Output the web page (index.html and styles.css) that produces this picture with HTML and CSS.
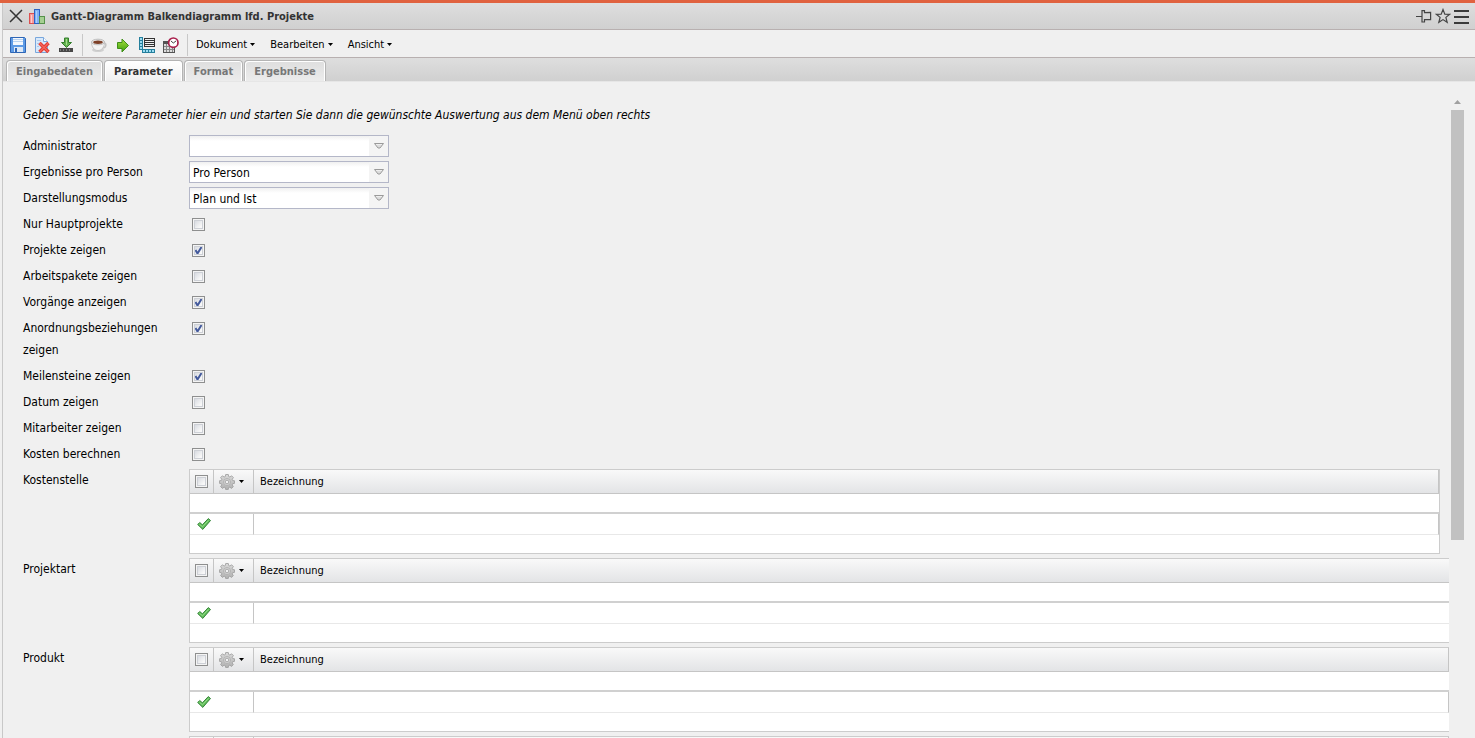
FILE: index.html
```html
<!DOCTYPE html>
<html lang="de">
<head>
    <meta charset="UTF-8">
    <meta name="viewport" content="width=device-width, initial-scale=1.0">
    <title>Gantt-Diagramm Balkendiagramm lfd. Projekte</title>
    <link rel="stylesheet" href="styles.css">
</head>
<body>
    <svg class="symbols" aria-hidden="true">
        <defs>
            <linearGradient id="gearFill" x1="0" y1="0" x2="0" y2="1">
                <stop offset="0" stop-color="#dadada"/>
                <stop offset="1" stop-color="#b0b0b0"/>
            </linearGradient>
            <linearGradient id="arrowFill" x1="0" y1="0" x2="0" y2="1">
                <stop offset="0" stop-color="#a6e03c"/>
                <stop offset="1" stop-color="#3c9e10"/>
            </linearGradient>
        </defs>
        <symbol id="drop" viewBox="0 0 10 6">
            <path d="M0.5 0.5h9L6 5H4z" fill="#dcdcdc" stroke="#9a9a9a"/>
            <path d="M2 1.5h6" stroke="#eee"/>
        </symbol>
        <symbol id="caret" viewBox="0 0 5 3">
            <path d="M0 0h5L2.5 3z" fill="#000"/>
        </symbol>
        <symbol id="gear" viewBox="0 0 16 16">
            <path d="M6.7 0.5h2.600l.4 2 1.200.5 1.700-1.200 1.800 1.800L13.200 5.300l.5 1.200 1.900.3v2.500l-1.900.4-.5 1.200 1.100 1.700-1.700 1.800-1.800-1.200-1.200.5-.4 1.900H6.700l-.4-1.900-1.200-.5-1.700 1.200-1.800-1.800 1.200-1.700-.5-1.200-1.900-.4V6.800l1.900-.3.5-1.200L1.600 3.600l1.800-1.800 1.700 1.200 1.200-.5z" fill="url(#gearFill)" stroke="#9a9a9a" stroke-width="0.8"/>
            <circle cx="8" cy="8" r="3.500" fill="#d8d8d8" stroke="#aaa" stroke-width="0.8"/>
            <circle cx="8" cy="8" r="1.800" fill="#f1f2f3" stroke="#9a9a9a" stroke-width="0.8"/>
        </symbol>
        <symbol id="tick" viewBox="0 0 14 12">
            <path d="M0.700 6.500L2.700 4.500l2.700 2.300L11.300 0.600l2.200 1.900L5.800 11.400z" fill="#62bd5a" stroke="#35853a" stroke-linejoin="round"/>
            <path d="M2.500 6.300l3 2.500L11.500 2.300" fill="none" stroke="#92dc88"/>
        </symbol>
    </svg>

    <div class="app">
        <header class="titlebar">
            <button class="icon-btn" aria-label="Schließen">
                <svg width="14" height="14" viewBox="0 0 14 14"><path d="M1 1l12 12M13 1L1 13" stroke="#333" stroke-width="1.5"/></svg>
            </button>
            <svg width="16" height="16" viewBox="0 0 16 16">
                <rect x="0.5" y="5.5" width="5" height="10" fill="#f59a9a" stroke="#dc5050"/>
                <rect x="5.5" y="1.5" width="5" height="14" fill="#7fb2f5" stroke="#2c62c4"/>
                <rect x="10.5" y="8.5" width="5" height="7" fill="#a5cf92" stroke="#55914a"/>
                <path d="M2.500 7v8" stroke="#fcc"/><path d="M7.500 3v12" stroke="#a9d0ff"/>
            </svg>
            <h1>Gantt-Diagramm Balkendiagramm lfd. Projekte</h1>
            <div class="window-tools">
                <button class="icon-btn" aria-label="Anheften">
                    <svg width="16" height="16" viewBox="0 0 16 16" fill="none" stroke="#444" stroke-width="1.2"><path d="M0 8.500h6M6 2v12.500M6 2.600h2.500v2L14.600 4.400v7.200H8.500v2.400H6"/></svg>
                </button>
                <button class="icon-btn" aria-label="Favorit">
                    <svg width="16" height="16" viewBox="0 0 16 16" fill="none" stroke="#444" stroke-width="1.2"><path d="M8 1.500l1.800 4.600 4.900.2-3.800 3.100 1.300 4.900L8 11.600l-4.200 2.700 1.300-4.900L1.300 6.300l4.900-.2z"/></svg>
                </button>
                <button class="icon-btn" aria-label="Menü">
                    <svg width="16" height="16" viewBox="0 0 16 16"><path d="M0 3h15M0 9h15M0 15h15" stroke="#3a3a3a" stroke-width="2"/></svg>
                </button>
            </div>
        </header>

        <div class="toolbar">
            <button class="icon-btn" aria-label="Speichern">
                <svg width="16" height="16" viewBox="0 0 16 16">
                    <path d="M0.5 0.5h14l1 1v14h-15z" fill="#5d9be6" stroke="#2f66b5"/>
                    <rect x="3" y="1" width="10" height="7" fill="#f4f8fd"/>
                    <path d="M3 2.500h10M3 4.500h10" stroke="#b9d3f0"/>
                    <rect x="4" y="10" width="9" height="5" fill="#dde8f5"/>
                    <rect x="5" y="11" width="2" height="4" fill="#2f66b5"/>
                </svg>
            </button>
            <button class="icon-btn" aria-label="Löschen">
                <svg width="16" height="16" viewBox="0 0 16 16">
                    <path d="M1.500 0.500h8l4 4v11h-12z" fill="#d9e9fa" stroke="#79a7dc"/>
                    <path d="M9.500 0.500v4h4" fill="#fff" stroke="#79a7dc"/>
                    <path d="M3 3.500h4M3 6.500h3M3 9.500h2" stroke="#a8c8ec"/>
                    <path d="M5.500 6l9 9M14.500 6l-9 9" stroke="#e33a30" stroke-width="3.500"/>
                    <path d="M5.500 6l9 9M14.500 6l-9 9" stroke="#f4635a" stroke-width="1.500"/>
                </svg>
            </button>
            <button class="icon-btn" aria-label="Herunterladen">
                <svg width="16" height="16" viewBox="0 0 16 16">
                    <path d="M6.500 1h4v4.500h3L8.500 10.500l-5-5h3z" fill="#63b34e" stroke="#337d2c"/>
                    <path d="M8.500 2v6" stroke="#a5dd90"/>
                    <rect x="1" y="11" width="14" height="4" fill="#484848"/>
                    <path d="M2 13h12" stroke="#b5b5b5" stroke-dasharray="1 2"/>
                </svg>
            </button>
            <span class="separator"></span>
            <button class="icon-btn" aria-label="Java">
                <svg width="16" height="16" viewBox="0 0 16 16">
                    <ellipse cx="7" cy="13" rx="6" ry="2" fill="#d0d0d0"/>
                    <path d="M12 6c4-1 4 5-1 5" fill="none" stroke="#c4c4c4" stroke-width="1.5"/>
                    <path d="M0.5 5c0 5 2.500 8.500 6.500 8.500S13.500 10 13.500 5z" fill="#f3f3f3" stroke="#c6c6c6"/>
                    <ellipse cx="7" cy="5" rx="6.500" ry="2.800" fill="#e9e9e9" stroke="#bcbcbc"/>
                    <ellipse cx="7" cy="5.200" rx="4.800" ry="1.700" fill="#7d4028"/>
                </svg>
            </button>
            <button class="icon-btn" aria-label="Starten">
                <svg width="16" height="16" viewBox="0 0 16 16"><path d="M2.500 5.500h4.500V2L13.500 8.500 7 15v-3.500H2.500z" fill="url(#arrowFill)" stroke="#3f8f18"/></svg>
            </button>
            <button class="icon-btn" aria-label="Diagramm">
                <svg width="16" height="16" viewBox="0 0 16 16">
                    <rect x="0.5" y="0.5" width="3" height="12" fill="#9bdcf2" stroke="#257f9c"/>
                    <rect x="3.500" y="12.500" width="12" height="3" fill="#9bdcf2" stroke="#257f9c"/>
                    <path d="M1 3.500h2M1 6.500h2M1 9.500h2M6.500 13v2M9.500 13v2M12.500 13v2" stroke="#257f9c"/>
                    <path d="M5 1.500h11M6 3.500h9M6 5.500h9M6 7.500h9M5 9.500h11M5.500 1v9M15.500 1v9" stroke="#333"/>
                </svg>
            </button>
            <button class="icon-btn" aria-label="Termine">
                <svg width="16" height="16" viewBox="0 0 16 16">
                    <rect x="0.5" y="4.500" width="11" height="11" fill="#ddd" stroke="#555"/>
                    <path d="M1 6h10" stroke="#555" stroke-width="2"/>
                    <path d="M1 9.500h10M1 12.500h10M3.500 7v8M6.500 7v8M9.500 7v8" stroke="#888"/>
                    <circle cx="10.300" cy="5.700" r="4.700" fill="#fff" stroke="#a91f4c" stroke-width="1.700"/>
                    <path d="M8 4l2.300 2L13 4" fill="none" stroke="#444"/>
                </svg>
            </button>
            <span class="separator"></span>
            <nav class="menus">
                <button class="menu">Dokument <svg width="5" height="3"><use href="#caret"/></svg></button>
                <button class="menu">Bearbeiten <svg width="5" height="3"><use href="#caret"/></svg></button>
                <button class="menu">Ansicht <svg width="5" height="3"><use href="#caret"/></svg></button>
            </nav>
        </div>

        <div class="tabs" role="tablist">
            <button class="tab" role="tab">Eingabedaten</button>
            <button class="tab active" role="tab" aria-selected="true">Parameter</button>
            <button class="tab" role="tab">Format</button>
            <button class="tab" role="tab">Ergebnisse</button>
        </div>

        <div class="page">
            <form class="content">
                <p class="hint">Geben Sie weitere Parameter hier ein und starten Sie dann die gewünschte Auswertung aus dem Menü oben rechts</p>

                <div class="row">
                    <label for="admin">Administrator</label>
                    <div class="select"><select id="admin"><option></option></select><svg width="10" height="6"><use href="#drop"/></svg></div>
                </div>
                <div class="row">
                    <label for="person">Ergebnisse pro Person</label>
                    <div class="select"><select id="person"><option>Pro Person</option></select><svg width="10" height="6"><use href="#drop"/></svg></div>
                </div>
                <div class="row">
                    <label for="mode">Darstellungsmodus</label>
                    <div class="select"><select id="mode"><option>Plan und Ist</option></select><svg width="10" height="6"><use href="#drop"/></svg></div>
                </div>
                <div class="row"><label for="main">Nur Hauptprojekte</label><input type="checkbox" id="main"></div>
                <div class="row"><label for="projects">Projekte zeigen</label><input type="checkbox" id="projects" checked></div>
                <div class="row"><label for="packages">Arbeitspakete zeigen</label><input type="checkbox" id="packages"></div>
                <div class="row"><label for="tasks">Vorgänge anzeigen</label><input type="checkbox" id="tasks" checked></div>
                <div class="row"><label for="links">Anordnungsbeziehungen zeigen</label><input type="checkbox" id="links" checked></div>
                <div class="row"><label for="milestones">Meilensteine zeigen</label><input type="checkbox" id="milestones" checked></div>
                <div class="row"><label for="date">Datum zeigen</label><input type="checkbox" id="date"></div>
                <div class="row"><label for="staff">Mitarbeiter zeigen</label><input type="checkbox" id="staff"></div>
                <div class="row"><label for="costs">Kosten berechnen</label><input type="checkbox" id="costs"></div>

                <div class="row">
                    <span id="kostenstelle">Kostenstelle</span>
                    <div class="grid">
                        <table aria-labelledby="kostenstelle">
                            <thead>
                                <tr>
                                    <th class="pick"><input type="checkbox" aria-label="Alle auswählen"></th>
                                    <th class="tools"><button type="button" class="gear" aria-label="Aktionen"><svg width="16" height="16"><use href="#gear"/></svg><svg width="5" height="3"><use href="#caret"/></svg></button></th>
                                    <th>Bezeichnung</th>
                                </tr>
                            </thead>
                            <tbody>
                                <tr class="blank"><td colspan="3"></td></tr>
                                <tr class="entry"><td colspan="2"><svg width="14" height="12"><use href="#tick"/></svg></td><td></td></tr>
                                <tr class="rest"><td colspan="3"></td></tr>
                            </tbody>
                        </table>
                    </div>
                </div>
                <div class="row">
                    <span id="projektart">Projektart</span>
                    <div class="grid wider">
                        <table aria-labelledby="projektart">
                            <thead>
                                <tr>
                                    <th class="pick"><input type="checkbox" aria-label="Alle auswählen"></th>
                                    <th class="tools"><button type="button" class="gear" aria-label="Aktionen"><svg width="16" height="16"><use href="#gear"/></svg><svg width="5" height="3"><use href="#caret"/></svg></button></th>
                                    <th>Bezeichnung</th>
                                </tr>
                            </thead>
                            <tbody>
                                <tr class="blank"><td colspan="3"></td></tr>
                                <tr class="entry"><td colspan="2"><svg width="14" height="12"><use href="#tick"/></svg></td><td></td></tr>
                                <tr class="rest"><td colspan="3"></td></tr>
                            </tbody>
                        </table>
                    </div>
                </div>
                <div class="row">
                    <span id="produkt">Produkt</span>
                    <div class="grid wide">
                        <table aria-labelledby="produkt">
                            <thead>
                                <tr>
                                    <th class="pick"><input type="checkbox" aria-label="Alle auswählen"></th>
                                    <th class="tools"><button type="button" class="gear" aria-label="Aktionen"><svg width="16" height="16"><use href="#gear"/></svg><svg width="5" height="3"><use href="#caret"/></svg></button></th>
                                    <th>Bezeichnung</th>
                                </tr>
                            </thead>
                            <tbody>
                                <tr class="blank"><td colspan="3"></td></tr>
                                <tr class="entry"><td colspan="2"><svg width="14" height="12"><use href="#tick"/></svg></td><td></td></tr>
                                <tr class="rest"><td colspan="3"></td></tr>
                            </tbody>
                        </table>
                    </div>
                </div>
                <div class="row">
                    <span></span>
                    <div class="grid wide">
                        <table>
                            <thead>
                                <tr><th class="pick"></th><th class="tools"></th><th></th></tr>
                            </thead>
                        </table>
                    </div>
                </div>
            </form>
            <div class="scrollbar">
                <svg width="7" height="4" viewBox="0 0 7 4"><path d="M0 4L3.500 0 7 4z" fill="#a0a0a0"/></svg>
                <div class="thumb"></div>
            </div>
        </div>
    </div>
</body>
</html>
```
FILE: styles.css
```css
* {
    box-sizing: border-box;
}
body {
    margin: 0;
    height: 100vh;
    overflow: hidden;
    background-color: #f0f0f0;
    border-top: 3px solid #e0623f;
    font-family: Tahoma, "DejaVu Sans Condensed", "DejaVu Sans", sans-serif;
    font-size: 12px;
    color: #000;
}
button {
    font-family: inherit;
    border: none;
    background: none;
    padding: 0;
    color: inherit;
}
svg {
    display: block;
    flex: none;
}
.symbols {
    position: absolute;
    width: 0;
    height: 0;
}
.app {
    display: flex;
    flex-direction: column;
    height: 100%;
    margin-left: 2px;
    border-left: 1px solid #c8c8c8;
}

/* title bar */
.titlebar {
    display: flex;
    align-items: center;
    gap: 6px;
    height: 27px;
    padding: 0 5px 0 6px;
    border-bottom: 1px solid #b8b0b0;
    background: linear-gradient(#dedede, #d0d0d0);
}
.titlebar h1 {
    margin: 0;
    font-size: 11px;
    color: #333;
}
.window-tools {
    display: flex;
    gap: 3px;
    margin-left: auto;
}

/* toolbar */
.toolbar {
    display: flex;
    align-items: center;
    gap: 8px;
    height: 28px;
    padding: 2px 7px 0;
    border-bottom: 1px solid #b8b0b0;
}
.separator {
    width: 1px;
    height: 22px;
    background-color: #c8c8c8;
}
.menus {
    display: flex;
    gap: 15px;
}
.menu {
    display: flex;
    align-items: center;
    gap: 3px;
    font-size: 11px;
}

/* tabs */
.tabs {
    display: flex;
    align-items: flex-end;
    gap: 1px;
    height: 24px;
    padding-left: 3px;
    border-bottom: 1px solid #e6e6e6;
    background: linear-gradient(#dedede, #d0d0d0);
}
.tab {
    height: 21px;
    padding: 0 9px;
    border: 1px solid #b4b4b4;
    border-bottom: none;
    border-radius: 4px 4px 0 0;
    box-shadow: inset 1px 1px #fff, inset -1px 0 #fff;
    background: linear-gradient(#dedede, #ececec);
    font-size: 11px;
    font-weight: bold;
    color: #777;
}
.tab.active {
    background: linear-gradient(#fff, #f0f0f0);
    color: #333;
}

/* form */
.page {
    display: flex;
    flex: 1;
    min-height: 0;
}
.content {
    flex: 1;
    min-width: 0;
    overflow: hidden;
    padding: 22px 9px 0 20px;
}
.hint {
    margin: 0 0 9px;
    line-height: 22px;
    font-style: italic;
}
.row {
    display: grid;
    grid-template-columns: 140px 1fr;
    column-gap: 26px;
    align-items: start;
    margin-bottom: 4px;
    line-height: 22px;
}
.select {
    position: relative;
    width: 200px;
    height: 22px;
}
.select select {
    appearance: none;
    width: 100%;
    height: 100%;
    padding: 1px 20px 0 3px;
    border: 1px solid #b4b7c8;
    border-radius: 0;
    background: linear-gradient(to right, transparent 179px, #f4f4f4 179px), linear-gradient(#f0f0f0, #fff 5px);
    font-family: inherit;
    font-size: 12px;
    color: #000;
}
.select svg {
    position: absolute;
    top: 8px;
    right: 5px;
}
input[type="checkbox"] {
    appearance: none;
    width: 13px;
    height: 13px;
    margin: 5px 3px 4px;
    border: 1px solid #8e8f8f;
    outline: 1px solid #cdd0d6;
    outline-offset: -3px;
    box-shadow: inset 0 0 0 1px #f4f4f4;
    background: linear-gradient(135deg, #cdd1d9, #f8f8f8 70%);
}
input[type="checkbox"]:checked {
    background: url("data:image/svg+xml,%3Csvg xmlns='http://www.w3.org/2000/svg' viewBox='0 0 11 11'%3E%3Cpath d='M2.500 5L4.500 8.500L8.500 2' fill='none' stroke='%23445a9c' stroke-width='2'/%3E%3C/svg%3E"), linear-gradient(135deg, #cdd1d9, #f8f8f8 70%);
}

/* selection tables */
.grid {
    border: 1px solid #ccc;
    background-color: #fff;
}
.grid.wide {
    margin-right: -10px;
}
.grid.wider {
    margin-right: -14px;
}
.grid table {
    width: 100%;
    table-layout: fixed;
    border-collapse: separate;
    border-spacing: 0;
    line-height: 16px;
}
.grid th {
    height: 24px;
    padding: 0 6px;
    border-right: 1px solid #c5c5c5;
    border-bottom: 1px solid #c5c5c5;
    background: linear-gradient(#f9f9f9, #e3e4e6);
    font-size: 11px;
    font-weight: normal;
    text-align: left;
}
.grid .pick {
    width: 24px;
    padding: 0;
}
.grid .pick input {
    display: block;
    margin: 0 5px;
}
.grid .tools {
    width: 40px;
    padding: 0 5px;
}
.gear {
    display: flex;
    align-items: center;
    gap: 4px;
}
.grid td {
    padding: 0;
}
.blank td {
    height: 20px;
    border-bottom: 2px solid #d0d0d0;
}
.entry td {
    height: 21px;
    padding: 0 7px;
    border-right: 1px solid #c5c5c5;
    border-bottom: 1px solid #e8e8e8;
}
.rest td {
    height: 18px;
}

/* scrollbar */
.scrollbar {
    display: flex;
    flex-direction: column;
    align-items: center;
    gap: 6px;
    width: 17px;
    margin-right: 9px;
    padding-top: 18px;
}
.thumb {
    width: 13px;
    height: calc(68% - 4px);
    background-color: #c1c1c1;
}
```
